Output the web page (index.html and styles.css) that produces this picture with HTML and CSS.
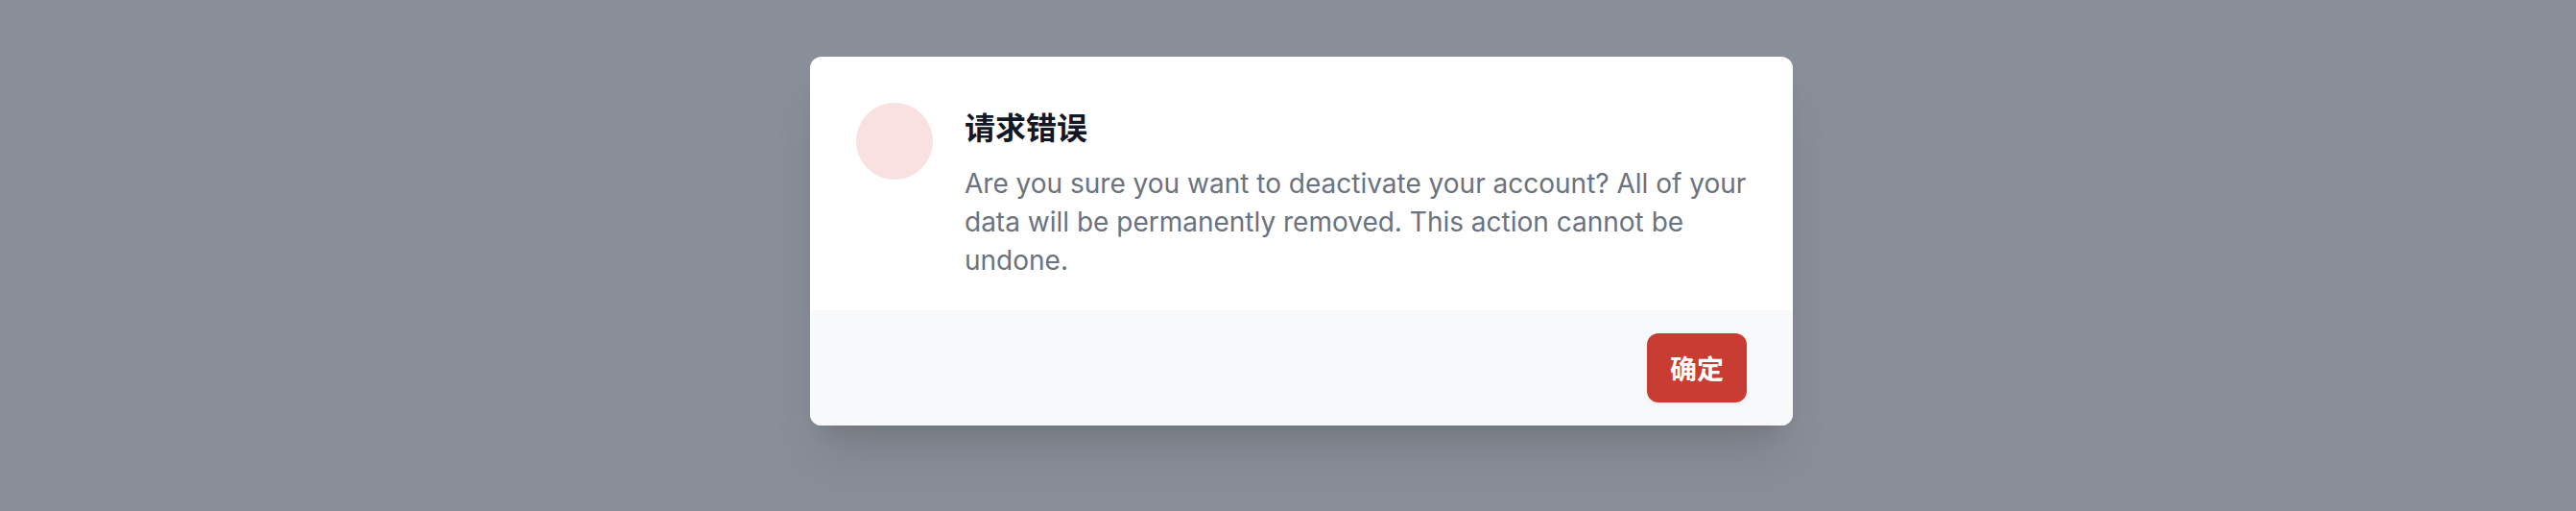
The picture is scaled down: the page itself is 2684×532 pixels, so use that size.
FILE: index.html
```html
<!DOCTYPE html>
<html lang="zh">
<head>
<meta charset="utf-8">
<link rel="stylesheet" href="styles.css">
</head>
<body>
<div class="overlay">
  <div class="dialog">
    <div class="dialog-body">
      <div class="icon-circle"></div>
      <div class="dialog-text">
        <h3 class="dialog-title">请求错误</h3>
        <p class="dialog-message">Are you sure you want to deactivate your account? All of your data will be permanently removed. This action cannot be undone.</p>
      </div>
    </div>
    <div class="dialog-footer">
      <button class="btn-confirm" type="button">确定</button>
    </div>
  </div>
</div>
</body>
</html>
```
FILE: styles.css
```css
* { box-sizing: border-box; }
html, body { margin: 0; padding: 0; }
body {
  width: 2684px;
  height: 532px;
  overflow: hidden;
  background: #8a8e98;
  font-family: Inter, "Noto Sans CJK SC", sans-serif;
}
.overlay {
  padding: 59px 0 0 844px;
}
.dialog {
  width: 1024px;
  background: #ffffff;
  border-radius: 12px;
  overflow: hidden;
  box-shadow: 0 40px 50px -10px rgba(0,0,0,0.1), 0 16px 20px -12px rgba(0,0,0,0.1);
}
.dialog-body {
  display: flex;
  align-items: flex-start;
  gap: 33px;
  padding: 48px 48px 32px 48px;
}
.icon-circle {
  flex: none;
  width: 80px;
  height: 80px;
  border-radius: 50%;
  background: #f9e1e1;
}
.dialog-text { flex: 1; min-width: 0; }
.dialog-title {
  margin: 0;
  font-size: 32px;
  line-height: 48px;
  font-weight: 700;
  color: #111827;
  font-family: "Noto Sans CJK SC", Inter, sans-serif;
}
.dialog-message {
  margin: 16px 0 0 0;
  font-size: 28px;
  line-height: 40px;
  color: #6b7280;
}
.dialog-footer {
  display: flex;
  justify-content: flex-end;
  padding: 24px 48px;
  background: #f8f9fb;
}
.btn-confirm {
  border: none;
  border-radius: 12px;
  padding: 16px 24px;
  background: #c93c32;
  color: #ffffff;
  font-family: "Noto Sans CJK SC", sans-serif;
  font-size: 28px;
  line-height: 40px;
  font-weight: 700;
  box-shadow: 0 2px 4px rgba(0,0,0,0.06);
}
```
